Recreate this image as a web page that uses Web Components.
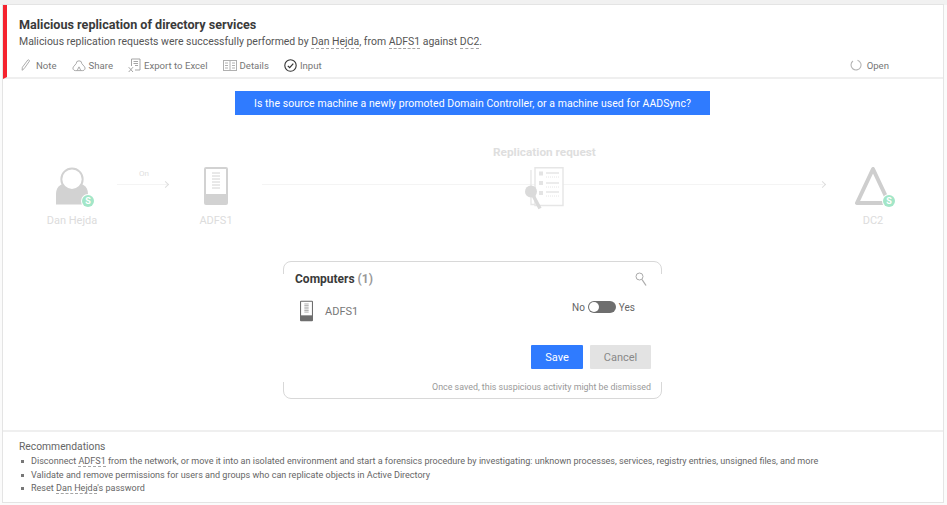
<!DOCTYPE html>
<html>
<head>
<meta charset="utf-8">
<style>
html, body { margin: 0; height: 100%; background: #fbfbfb; }
body { padding: 5px 3px 2px 3px; box-sizing: border-box; font-family: Roboto, "Open Sans", sans-serif; overflow: hidden; background: linear-gradient(#f1f1f1 5px, #fbfbfb 5px); }
</style>
</head>
<body>
<alert-card>
  <alert-header slot="header"></alert-header>
  <alert-diagram slot="body"></alert-diagram>
  <alert-footer slot="footer"></alert-footer>
</alert-card>

<script>
const SERVER = (w, h) => `<svg width="${w}" height="${h}" viewBox="0 0 24 38">
  <rect x="0" y="0" width="24" height="38" rx="2" fill="currentColor"/>
  <rect x="2" y="2" width="20" height="25" fill="#fff"/>
  <path d="M8 6h8M8 9h8M8 12h8M8 15h8M8 18h8M8 21h8" stroke="currentColor" stroke-width="1"/>
</svg>`;

const BADGE = `<svg width="14" height="14" viewBox="0 0 14 14" style="display:block">
  <circle cx="7" cy="7" r="7" fill="#fff"/>
  <circle cx="7" cy="7" r="6" fill="#a3e6c8"/>
  <text x="7" y="10.200" text-anchor="middle" font-size="9" font-weight="700" fill="#fff" font-family="Roboto, sans-serif">S</text>
</svg>`;

class AlertCard extends HTMLElement {
  constructor() {
    super();
    this.attachShadow({ mode: "open" });
    this.shadowRoot.innerHTML = `<style>
:host { display: flex; flex-direction: column; height: 497px; width: 940px; background: #fff; box-shadow: 0 0 0 1px #e4e4e4; }
.main { flex: 1; min-height: 0; display: flex; }
</style>
<slot name="header"></slot>
<div class="main"><slot name="body"></slot></div>
<slot name="footer"></slot>`;
  }
}

class EntityLink extends HTMLElement {
  constructor() {
    super();
    this.attachShadow({ mode: "open" });
    this.shadowRoot.innerHTML = `<style>
:host { display: inline; border-bottom: 1px dashed #a5a5a5; }
</style><slot></slot>`;
  }
}

class ToolbarItem extends HTMLElement {
  constructor() {
    super();
    this.attachShadow({ mode: "open" });
    this.shadowRoot.innerHTML = `<style>
:host { display: inline-flex; align-items: center; gap: var(--gap, 3px); color: #777; font-size: 9.600px; height: 16px; }
::slotted(svg) { display: block; }
</style><slot name="icon"></slot><slot></slot>`;
  }
}

class AlertHeader extends HTMLElement {
  constructor() {
    super();
    this.attachShadow({ mode: "open" });
    this.shadowRoot.innerHTML = `<style>
:host { display: block; border-left: 4px solid #f5222d; border-bottom: 2px solid #efefef; height: 72px; box-sizing: content-box; padding: 0 0 0 12px; }
.title { font-size: 12.600px; font-weight: 700; color: #3a3a3a; padding-top: 11px; line-height: 17px; }
.desc { font-size: 10.460px; color: #555; line-height: 16px; margin-top: 1px; }
.bar { display: flex; align-items: center; margin-top: 7px; padding-left: 2px; padding-right: 54px; }
.bar toolbar-item { margin-right: 15px; }
.bar .end { margin: 0 0 0 auto; }
</style>
<div class="title">Malicious replication of directory services</div>
<div class="desc">Malicious replication requests were successfully performed by <entity-link>Dan Hejda</entity-link>, from <entity-link>ADFS1</entity-link> against <entity-link>DC2</entity-link>.</div>
<div class="bar">
  <toolbar-item style="--gap:5px"><svg slot="icon" width="10" height="14" viewBox="0 0 11 14" fill="none" stroke="#a5a5a5"><path d="M1.500 9.500 7.500 1.500c.6-.7 2.300.4 1.800 1.200L3.500 11 1.200 12.800z"/></svg>Note</toolbar-item>
  <toolbar-item><svg slot="icon" width="14" height="14" viewBox="0 0 15 14" fill="none" stroke="#a5a5a5"><path d="M4.500 5.500A3 3 0 0 1 10.500 5.500L13.500 9A2.500 2.500 0 0 1 11.500 13H3.500A2.500 2.500 0 0 1 1.500 9z"/><path d="M5.500 13 7.500 9l2 4"/></svg>Share</toolbar-item>
  <toolbar-item><svg slot="icon" width="13" height="15" viewBox="0 0 13 15" fill="none" stroke="#a5a5a5"><path d="M3.500 8V1h8.500v11H7M5.500 3.500h4.500M5.500 5.500h4.500M7 7.500h3"/><path d="M.7 9.200 5 14M5 9.200.7 14"/></svg>Export to Excel</toolbar-item>
  <toolbar-item><svg slot="icon" width="14" height="11" viewBox="0 0 14 11" fill="none" stroke="#b0b0b0"><rect x=".5" y=".5" width="13" height="10"/><path d="M7 .5v10M2 3h3M2 5.500h3M2 8h3M9 3h3M9 5.500h3M9 8h3"/></svg>Details</toolbar-item>
  <toolbar-item><svg slot="icon" width="13" height="13" viewBox="0 0 13 13" fill="none" stroke="#333"><circle cx="6.500" cy="6.500" r="5.700" stroke-width="1.100"/><path d="M3.800 6.800 5.700 8.700 9.300 4.600" stroke-width="1.200"/></svg>Input</toolbar-item>
  <toolbar-item class="end" style="--gap:5px"><svg slot="icon" width="12" height="12" viewBox="0 0 12 12" fill="none" stroke="#b5b5b5" stroke-width="1.100"><path d="M7.500 1.200A5 5 0 1 1 3 2"/></svg>Open</toolbar-item>
</div>`;
  }
}

class DiagramNode extends HTMLElement {
  static get observedAttributes() { return ["label"]; }
  constructor() {
    super();
    this.attachShadow({ mode: "open" });
    this.shadowRoot.innerHTML = `<style>
:host { display: flex; flex-direction: column; align-items: center; position: absolute; color: #d2d2d2; width: 80px; }
.label { color: #dcdcdc; font-size: 11px; line-height: 14px; white-space: nowrap; }
.icon { position: relative; height: 40px; display: flex; align-items: flex-end; margin-bottom: 9px; }
</style>
<div class="icon"><slot></slot></div>
<div class="label"></div>`;
  }
  attributeChangedCallback(n, o, v) {
    this.shadowRoot.querySelector(".label").textContent = v;
  }
}

class ApprovalDialog extends HTMLElement {
  constructor() {
    super();
    this.attachShadow({ mode: "open" });
    this.shadowRoot.innerHTML = `<style>
:host { display: block; position: absolute; left: 280px; top: 182px; width: 377px; height: 136px; background: #fff; border: 1px solid #d8d8d8; border-radius: 8px; box-sizing: content-box; }
.gapl, .gapr { position: absolute; width: 3px; height: 108px; background: #fff; top: 12px; }
.gapl { left: -2px; } .gapr { right: -2px; }
.head { display: flex; align-items: center; justify-content: space-between; padding: 8px 14px 0 11px; height: 17px; }
.name { font-size: 12px; font-weight: 700; color: #3a3a3a; }
.name span { color: #999; }
.row { display: flex; padding: 13px 26px 0 16px; align-items: flex-start; }
.pc { color: #6e6e6e; display: block; margin-right: 12px; }
.host { font-size: 11px; color: #777; margin-top: 5px; flex: 1; }
.tog { display: flex; align-items: center; gap: 3px; font-size: 10px; color: #666; margin-top: 1px; }
.sw { width: 28px; height: 12px; border-radius: 6px; background: #6e6e6e; position: relative; }
.sw i { position: absolute; left: 1px; top: 1px; width: 10px; height: 10px; border-radius: 50%; background: #fff; }
.actions { display: flex; justify-content: flex-end; gap: 7px; padding: 19px 10px 0 0; }
.btn { height: 24px; border-radius: 1px; font-size: 11px; display: flex; align-items: center; justify-content: center; }
.save { width: 52px; background: #2f7bff; color: #fff; }
.cancel { width: 61px; background: #e3e3e3; color: #888; }
.note { text-align: right; font-size: 8.900px; color: #999; padding: 12px 10px 0 0; line-height: 12px; }
</style>
<div class="gapl"></div><div class="gapr"></div>
<div class="head"><div class="name">Computers <span>(1)</span></div>
<svg width="12" height="14" viewBox="0 0 12 14" fill="none" stroke="#aaa"><circle cx="4.500" cy="4.500" r="3.500"/><path d="M7 7.500l4 6" stroke-width="1.300"/></svg></div>
<div class="row"><span class="pc">${SERVER(13, 22)}</span><div class="host">ADFS1</div>
<div class="tog">No <div class="sw"><i></i></div> Yes</div></div>
<div class="actions"><div class="btn save">Save</div><div class="btn cancel">Cancel</div></div>
<div class="note">Once saved, this suspicious activity might be dismissed</div>`;
  }
}

class AlertDiagram extends HTMLElement {
  constructor() {
    super();
    this.attachShadow({ mode: "open" });
    this.shadowRoot.innerHTML = `<style>
:host { display: block; position: relative; flex: 1; }
.question { position: absolute; left: 232px; top: 12px; width: 475px; height: 24px; background: #2f7bff; color: #fff; font-size: 10.460px; letter-spacing: 0.08px; display: flex; align-items: center; justify-content: center; }
.line { position: absolute; height: 1px; background: #f4f4f4; }
.chev { position: absolute; width: 4px; height: 4px; border-top: 1px solid #ddd; border-right: 1px solid #ddd; transform: rotate(45deg); }
.on { position: absolute; left: 136px; top: 90px; font-size: 8px; color: #e0e0e0; }
.req { position: absolute; left: 490px; top: 66px; font-size: 11.800px; font-weight: 700; color: #dedede; white-space: nowrap; }
.badge { position: absolute; }
svg { display: block; }
</style>
<div class="question">Is the source machine a newly promoted Domain Controller, or a machine used for AADSync?</div>
<div class="line" style="left:114px;top:105px;width:50px"></div><div class="chev" style="left:160px;top:103px"></div>
<div class="line" style="left:259px;top:105px;width:561px"></div><div class="chev" style="left:817px;top:103px"></div>
<div class="on">On</div>
<div class="req">Replication request</div>
<diagram-node label="Dan Hejda" style="left:29px;top:86px">
  <svg width="32" height="38" viewBox="0 0 33 38"><path d="M0 38V27C0 19 7 15 16.500 15S33 19 33 27V38z" fill="#d2d2d2"/><circle cx="16.500" cy="12" r="11" fill="#fff" stroke="#d2d2d2" stroke-width="2"/></svg>
  <span class="badge" style="position:absolute;right:-7px;bottom:-3px">${BADGE}</span>
</diagram-node>
<diagram-node label="ADFS1" style="left:173px;top:86px">${SERVER(24, 38)}</diagram-node>
<svg style="position:absolute;left:522px;top:88px" width="40" height="44" viewBox="0 0 40 44" fill="none" stroke="#e6e6e6">
  <path d="M6 3V37.500H11" stroke-width="1.300"/>
  <path d="M10 38.500H38V.7H10z" fill="#fff" stroke-width="1.400"/>
  <path d="M14 4.500h4v4h-4zM14 14h4v4h-4zM14 24h4v4h-4z" fill="#e4e4e4" stroke="none"/>
  <path d="M21 6h13M21 16h13M21 25h13" stroke-width="1.500"/>
  <path d="M21 10h13M21 20h13M21 29h13" stroke-dasharray="1 1"/>
  <circle cx="6" cy="24.500" r="6" fill="#dadada" stroke="none"/>
  <path d="M6 24.500l9 17" stroke="#dadada" stroke-width="3.500"/>
</svg>
<diagram-node label="DC2" style="left:830px;top:86px">
  <svg width="36" height="38" viewBox="0 0 36 38"><path d="M18 2 2 36H34z" fill="none" stroke="#cecece" stroke-width="4" stroke-linejoin="round"/></svg>
  <span class="badge" style="position:absolute;right:-5px;bottom:-3px">${BADGE}</span>
</diagram-node>
<approval-dialog></approval-dialog>`;
  }
}

class AlertFooter extends HTMLElement {
  constructor() {
    super();
    this.attachShadow({ mode: "open" });
    this.shadowRoot.innerHTML = `<style>
:host { display: block; border-top: 2px solid #efefef; height: 72px; padding: 7px 0 0 16px; box-sizing: border-box; color: #666; }
.h { font-size: 10.300px; line-height: 16px; }
ul { margin: 0; padding: 0; list-style: none; font-size: 9.050px; }
li { line-height: 13.500px; padding-left: 12px; position: relative; }
li::before { content: ""; position: absolute; left: 2px; top: 5px; width: 3px; height: 3px; background: #777; }
</style>
<div class="h">Recommendations</div>
<ul>
<li>Disconnect <entity-link>ADFS1</entity-link> from the network, or move it into an isolated environment and start a forensics procedure by investigating: unknown processes, services, registry entries, unsigned files, and more</li>
<li>Validate and remove permissions for users and groups who can replicate objects in Active Directory</li>
<li>Reset <entity-link>Dan Hejda</entity-link>'s password</li>
</ul>`;
  }
}

customElements.define("entity-link", EntityLink);
customElements.define("toolbar-item", ToolbarItem);
customElements.define("alert-header", AlertHeader);
customElements.define("diagram-node", DiagramNode);
customElements.define("approval-dialog", ApprovalDialog);
customElements.define("alert-diagram", AlertDiagram);
customElements.define("alert-footer", AlertFooter);
customElements.define("alert-card", AlertCard);
</script>
</body>
</html>
